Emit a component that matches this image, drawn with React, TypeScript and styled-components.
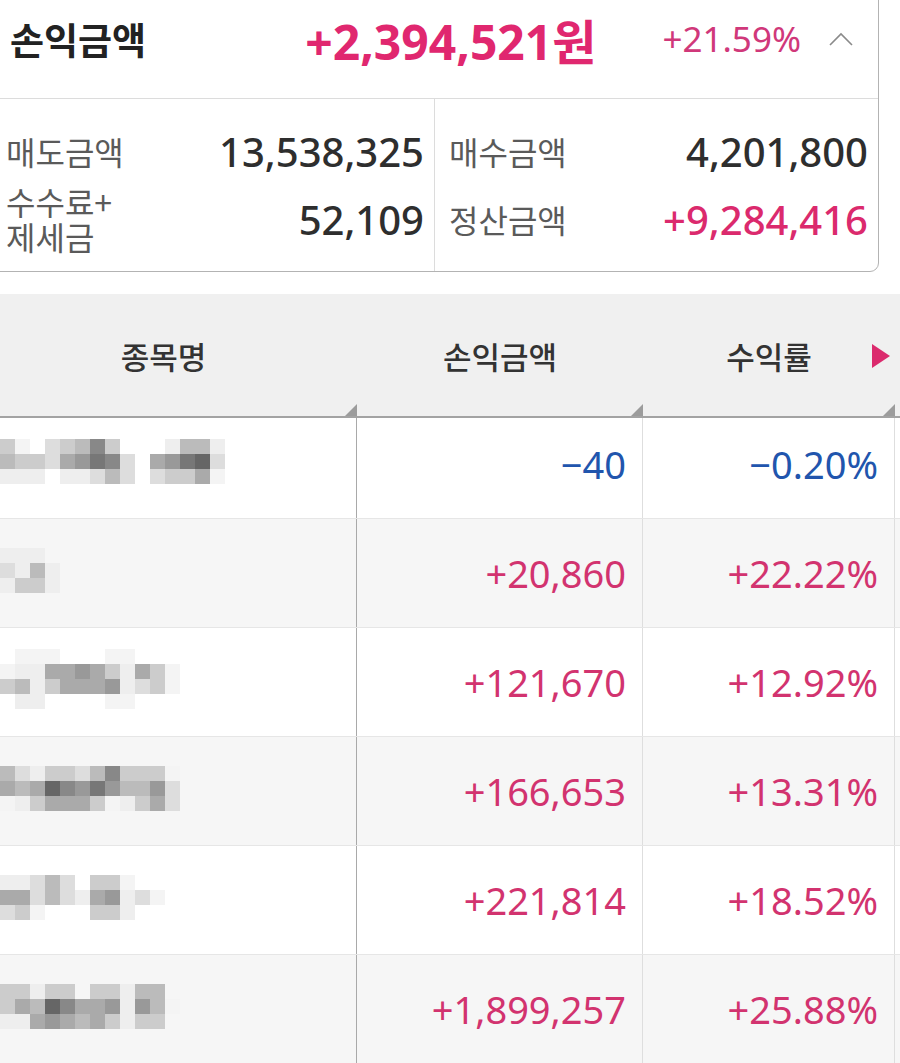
import React from "react"
import styled, { createGlobalStyle } from "styled-components"

const GlobalStyle = createGlobalStyle`
  html, body {
    margin: 0;
    padding: 0;
    background: #ffffff;
  }
  body {
    font-family: "Noto Sans", "Noto Sans CJK KR", sans-serif;
    color: #333;
    overflow: hidden;
  }
`

const PINK = "#db2a6d"
const BLUE = "#2155ad"

const Page = styled.div`
  width: 900px;
  height: 1063px;
  overflow: hidden;
`

const SummaryCard = styled.div`
  margin: -10px 21px 0 -12px;
  border: 1px solid #b3b3b3;
  border-radius: 0 0 9px 0;
  background: #fff;
`

const CardHeader = styled.div`
  height: 108px;
  display: flex;
  align-items: center;
  padding: 0 25px 12px 21px;
  box-sizing: border-box;
  border-bottom: 1px solid #dcdcdc;
`

const Title = styled.div`
  flex: 1;
  font-family: "Noto Sans CJK KR", sans-serif;
  font-size: 37px;
  font-weight: 700;
  color: #222;
`

const TotalAmount = styled.div`
  font-family: "Noto Sans", "Noto Sans CJK KR", sans-serif;
  font-size: 48px;
  font-weight: 700;
  color: #e0276f;
`

const TotalRate = styled.div`
  margin-left: 66px;
  font-family: "Noto Sans", sans-serif;
  font-size: 35px;
  color: #d0387a;
`

const Chevron = styled.svg`
  margin-left: 28px;
  width: 24px;
  height: 14px;
`

const CardBody = styled.div`
  display: grid;
  grid-template-columns: 446px 1fr;
`

const Half = styled.div<{ $first?: boolean }>`
  padding: 18px 10px 18px ${(p) => (p.$first ? "17px" : "14px")};
  border-right: ${(p) => (p.$first ? "1px solid #dcdcdc" : "none")};
`

const InfoRow = styled.div`
  height: 68px;
  display: flex;
  align-items: center;
  justify-content: space-between;
`

const InfoLabel = styled.div`
  font-family: "Noto Sans CJK KR", sans-serif;
  font-size: 32px;
  line-height: 36px;
  color: #5a5a5a;
`

const LabelLine = styled.span`
  display: block;
  height: 35px;
  line-height: 35px;
`

const InfoValue = styled.div<{ $pink?: boolean }>`
  font-family: "Noto Sans", sans-serif;
  font-size: 40px;
  font-weight: 500;
  color: ${(p) => (p.$pink ? PINK : "#2e2e2e")};
`

const Table = styled.div`
  margin: 22px 0 0 -30px;
`

const HeaderRow = styled.div`
  display: grid;
  grid-template-columns: 387px 286px 252px 40px;
  height: 124px;
  background: #f0f0f0;
  border-bottom: 2px solid #a3a3a3;
  box-sizing: border-box;
`

const HeaderCell = styled.div`
  position: relative;
  display: flex;
  align-items: center;
  justify-content: center;
  font-family: "Noto Sans CJK KR", sans-serif;
  font-size: 31px;
  font-weight: 500;
  color: #333;
`

const CornerMark = styled.span`
  position: absolute;
  right: 0;
  bottom: 0;
  width: 12px;
  height: 12px;
  background: #9c9c9c;
  clip-path: polygon(100% 0, 100% 100%, 0 100%);
`

const NextMark = styled.span`
  position: absolute;
  right: 5px;
  top: 50px;
  width: 18px;
  height: 24px;
  background: ${PINK};
  clip-path: polygon(0 0, 100% 50%, 0 100%);
`

const Row = styled.div<{ $alt: boolean; $first: boolean }>`
  display: grid;
  grid-template-columns: 387px 286px 252px 40px;
  height: ${(p) => (p.$first ? "101px" : "109px")};
  background: ${(p) => (p.$alt ? "#f6f6f6" : "#fff")};
  border-bottom: 1px solid #e6e6e6;
  box-sizing: border-box;
  & > * {
    padding-bottom: ${(p) => (p.$first ? "8px" : "0")};
  }
`

const NameCell = styled.div`
  display: flex;
  align-items: center;
  padding-left: 30px;
  border-right: 1px solid #a9a9a9;
`

const Mosaic = styled.div`
  display: flex;
  flex-direction: column;
  margin-top: -6px;
`

const MosaicLine = styled.div`
  display: flex;
`

const Px = styled.span<{ $c: string }>`
  width: 15px;
  height: 15px;
  background: ${(p) => p.$c};
`

const ValueCell = styled.div<{ $neg: boolean }>`
  display: flex;
  align-items: center;
  justify-content: flex-end;
  padding-right: 16px;
  border-right: 1px solid #dedede;
  font-family: "Noto Sans", sans-serif;
  font-size: 38px;
  color: ${(p) => (p.$neg ? BLUE : "#d2336f")};
`

const Filler = styled.div``

const shade = (ch: string) => {
  if (ch === ".") return "transparent"
  if (ch === "f") return "#f4f4f4"
  return `#${ch}${ch}${ch}`
}

const rows = [
  {
    name: ["cf.dcb8c...ebbe", "bccda978d.a976d", "eee.eedbd.dccaf"],
    amount: "\u221240",
    rate: "\u22120.20%",
    neg: true,
  },
  {
    name: ["eee", "debe", "ecce"],
    amount: "+20,860",
    rate: "+22.22%",
    neg: false,
  },
  {
    name: [".fff...ff", "feeaa9aceacf", "cbecaaa9edcf", ".ee....ff"],
    amount: "+121,670",
    rate: "+12.92%",
    neg: false,
  },
  {
    name: ["bdeccdb8cccf", "aba68979bb9d", "fecaaacfecad"],
    amount: "+166,653",
    rate: "+13.31%",
    neg: false,
  },
  {
    name: ["eedbd.ccf", "aadbdea9edf", "dcf...cce"],
    amount: "+221,814",
    rate: "+18.52%",
    neg: false,
  },
  {
    name: ["ccecc.ccebb", "cab68aa9e9bf", "eea9abacecc"],
    amount: "+1,899,257",
    rate: "+25.88%",
    neg: false,
  },
]

const App: React.FC = () => {
  return (
    <Page>
      <GlobalStyle />
      <SummaryCard>
        <CardHeader>
          <Title>손익금액</Title>
          <TotalAmount>+2,394,521원</TotalAmount>
          <TotalRate>+21.59%</TotalRate>
          <Chevron viewBox="0 0 24 14">
            <polyline
              points="1,13 12,2 23,13"
              fill="none"
              stroke="#8a8a8a"
              strokeWidth="1.6"
            />
          </Chevron>
        </CardHeader>
        <CardBody>
          <Half $first>
            <InfoRow>
              <InfoLabel>매도금액</InfoLabel>
              <InfoValue>13,538,325</InfoValue>
            </InfoRow>
            <InfoRow>
              <InfoLabel>
                <LabelLine>수수료+</LabelLine>
                <LabelLine>제세금</LabelLine>
              </InfoLabel>
              <InfoValue>52,109</InfoValue>
            </InfoRow>
          </Half>
          <Half>
            <InfoRow>
              <InfoLabel>매수금액</InfoLabel>
              <InfoValue>4,201,800</InfoValue>
            </InfoRow>
            <InfoRow>
              <InfoLabel>정산금액</InfoLabel>
              <InfoValue $pink>+9,284,416</InfoValue>
            </InfoRow>
          </Half>
        </CardBody>
      </SummaryCard>

      <Table>
        <HeaderRow>
          <HeaderCell>
            종목명
            <CornerMark />
          </HeaderCell>
          <HeaderCell>
            손익금액
            <CornerMark />
          </HeaderCell>
          <HeaderCell>
            수익률
            <NextMark />
            <CornerMark />
          </HeaderCell>
          <Filler />
        </HeaderRow>
        {rows.map((r, i) => (
          <Row key={i} $alt={i % 2 === 1} $first={i === 0}>
            <NameCell>
              <Mosaic>
                {r.name.map((line, j) => (
                  <MosaicLine key={j}>
                    {line.split("").map((ch, k) => (
                      <Px key={k} $c={shade(ch)} />
                    ))}
                  </MosaicLine>
                ))}
              </Mosaic>
            </NameCell>
            <ValueCell $neg={r.neg}>{r.amount}</ValueCell>
            <ValueCell $neg={r.neg}>{r.rate}</ValueCell>
            <Filler />
          </Row>
        ))}
      </Table>
    </Page>
  )
}

export default App
